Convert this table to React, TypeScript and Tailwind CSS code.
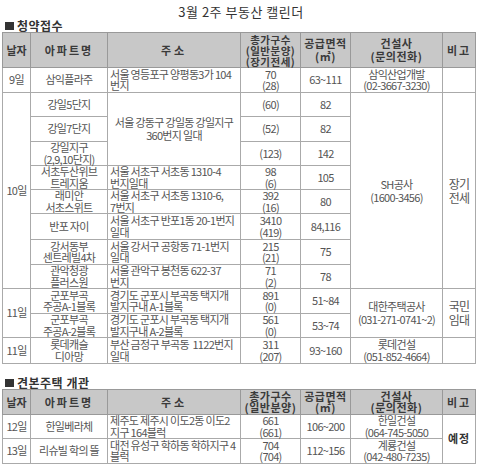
export default function App() {
  const td = 'border border-[#aaaaaa] text-center align-middle p-0 whitespace-nowrap leading-[11.5px]';
  const addr = 'border border-[#aaaaaa] text-left align-middle pl-[2px] whitespace-nowrap leading-[11.5px]';
  const th = 'border border-[#999999] bg-[#c8c8c8] text-center align-middle p-0 font-bold text-[#3a3a3a] tracking-[0.5px] whitespace-nowrap';

  return (
    <div className="w-[480px] h-[467px] bg-white font-['Noto_Sans_CJK_KR',sans-serif] text-[#555555] text-[11px] leading-[12px] tracking-[-0.7px] pl-[2px] overflow-hidden">
      {/* title */}
      <div className="h-[20px] text-center text-[13px] leading-[23px] tracking-[0.5px] text-[#333333]">3월 2주 부동산 캘린더</div>

      <div className="h-[12px] flex items-center gap-[3px] pl-[3px] text-[12px] leading-[12px] font-bold tracking-[0.5px] text-[#333333]">
        <span className="inline-block w-[9px] h-[8px] bg-[#333333]"></span>
        <span>청약접수</span>
      </div>

      {/* 청약접수 */}
      <table className="table-fixed border-collapse border border-[#888888] w-[473px]">
        <colgroup>
          <col className="w-[28px]" />
          <col className="w-[77px]" />
          <col className="w-[133px]" />
          <col className="w-[60px]" />
          <col className="w-[50px]" />
          <col className="w-[92px]" />
          <col className="w-[33px]" />
        </colgroup>
        <tbody>
          <tr className="h-[35px]">
            <td className={th + ' tracking-[0px]'}>날자</td>
            <td className={th + ' tracking-[2px]'}>아파트명</td>
            <td className={th + ' tracking-[3px]'}>주소</td>
            <td className={th + ' text-[10.5px] leading-[11px]'}>총가구수<br />(일반분양)<br />(장기전세)</td>
            <td className={th + ' leading-[13px]'}>공급면적<br />(㎡)</td>
            <td className={th + ' leading-[13px]'}>건설사<br />(문의전화)</td>
            <td className={th + ' tracking-[2px]'}>비고</td>
          </tr>
          <tr className="h-[25px]">
            <td className={td}>9일</td>
            <td className={td}>삼익플라주</td>
            <td className={addr}>서울 영등포구 양평동3가 104<br />번지</td>
            <td className={td}>70<br />(28)</td>
            <td className={td}>63~111</td>
            <td className={td}>삼익산업개발<br />(02-3667-3230)</td>
            <td className={td}></td>
          </tr>
          <tr className="h-[24px]">
            <td className={td} rowSpan={8}>10일</td>
            <td className={td}>강일5단지</td>
            <td className={td + ' leading-[13px]'} rowSpan={3}>서울 강동구 강일동 강일지구<br />360번지 일대</td>
            <td className={td}>(60)</td>
            <td className={td}>82</td>
            <td className={td + ' leading-[13px]'} rowSpan={8}>SH공사<br />(1600-3456)</td>
            <td className={td + ' text-[12px] leading-[14px]'} rowSpan={8}>장기<br />전세</td>
          </tr>
          <tr className="h-[25px]">
            <td className={td}>강일7단지</td>
            <td className={td}>(52)</td>
            <td className={td}>82</td>
          </tr>
          <tr className="h-[24px]">
            <td className={td}>강일지구<br />(2,9,10단지)</td>
            <td className={td}>(123)</td>
            <td className={td}>142</td>
          </tr>
          <tr className="h-[24px]">
            <td className={td}>서초두산위브<br />트레지움</td>
            <td className={addr}>서울 서초구 서초동 1310-4<br />번지일대</td>
            <td className={td}>98<br />(6)</td>
            <td className={td}>105</td>
          </tr>
          <tr className="h-[24px]">
            <td className={td}>래미안<br />서초스위트</td>
            <td className={addr}>서울 서초구 서초동 1310-6,<br />7번지</td>
            <td className={td}>392<br />(16)</td>
            <td className={td}>80</td>
          </tr>
          <tr className="h-[26px]">
            <td className={td}>반포 자이</td>
            <td className={addr}>서울 서초구 반포1동 20-1번지<br />일대</td>
            <td className={td}>3410<br />(419)</td>
            <td className={td}>84,116</td>
          </tr>
          <tr className="h-[25px]">
            <td className={td}>강서동부<br />센트레빌4차</td>
            <td className={addr}>서울 강서구 공항동 71-1번지<br />일대</td>
            <td className={td}>215<br />(21)</td>
            <td className={td}>75</td>
          </tr>
          <tr className="h-[24px]">
            <td className={td}>관악청광<br />플러스원</td>
            <td className={addr}>서울 관악구 봉천동 622-37<br />번지</td>
            <td className={td}>71<br />(2)</td>
            <td className={td}>78</td>
          </tr>
          <tr className="h-[25px]">
            <td className={td} rowSpan={2}>11일</td>
            <td className={td}>군포부곡<br />주공A-1블록</td>
            <td className={addr}>경기도 군포시 부곡동 택지개<br />발지구내 A-1블록</td>
            <td className={td}>891<br />(0)</td>
            <td className={td}>51~84</td>
            <td className={td + ' leading-[13px]'} rowSpan={2}>대한주택공사<br />(031-271-0741~2)</td>
            <td className={td + ' text-[12px] leading-[14px]'} rowSpan={2}>국민<br />임대</td>
          </tr>
          <tr className="h-[24px]">
            <td className={td}>군포부곡<br />주공A-2블록</td>
            <td className={addr}>경기도 군포시 부곡동 택지개<br />발지구내 A-2블록</td>
            <td className={td}>561<br />(0)</td>
            <td className={td}>53~74</td>
          </tr>
          <tr className="h-[26px]">
            <td className={td}>11일</td>
            <td className={td}>롯데캐슬<br />디아망</td>
            <td className={addr}>부산 금정구 부곡동 &nbsp;1122번지<br />일대</td>
            <td className={td}>311<br />(207)</td>
            <td className={td}>93~160</td>
            <td className={td}>롯데건설<br />(051-852-4664)</td>
            <td className={td}></td>
          </tr>
        </tbody>
      </table>

      <div className="mt-[12px] h-[13px] flex items-center gap-[3px] pl-[3px] text-[12px] leading-[13px] font-bold tracking-[0.5px] text-[#333333]">
        <span className="inline-block w-[9px] h-[8px] bg-[#333333]"></span>
        <span>견본주택 개관</span>
      </div>

      {/* 견본주택 개관 */}
      <table className="table-fixed border-collapse border border-[#777777] w-[473px]">
        <colgroup>
          <col className="w-[28px]" />
          <col className="w-[77px]" />
          <col className="w-[133px]" />
          <col className="w-[60px]" />
          <col className="w-[50px]" />
          <col className="w-[92px]" />
          <col className="w-[33px]" />
        </colgroup>
        <tbody>
          <tr className="h-[25px]">
            <td className={th + ' tracking-[0px]'}>날자</td>
            <td className={th + ' tracking-[2px]'}>아파트명</td>
            <td className={th + ' tracking-[3px]'}>주소</td>
            <td className={th + ' leading-[11.5px]'}>총가구수<br />(일반분양)</td>
            <td className={th + ' leading-[11.5px]'}>공급면적<br />(㎡)</td>
            <td className={th + ' leading-[11.5px]'}>건설사<br />(문의전화)</td>
            <td className={th + ' tracking-[2px]'}>비고</td>
          </tr>
          <tr className="h-[24px]">
            <td className={td}>12일</td>
            <td className={td}>한일베라체</td>
            <td className={addr}>제주도 제주시 이도2동 이도2<br />지구 164블럭</td>
            <td className={td}>661<br />(661)</td>
            <td className={td}>106~200</td>
            <td className={td}>한일건설<br />(064-745-5050</td>
            <td className={td + ' font-bold text-[#333333] tracking-[1px]'} rowSpan={2}>예정</td>
          </tr>
          <tr className="h-[25px]">
            <td className={td}>13일</td>
            <td className={td}>리슈빌 학의 뜰</td>
            <td className={addr}>대전 유성구 학하동 학하지구 4<br />블럭</td>
            <td className={td}>704<br />(704)</td>
            <td className={td}>112~156</td>
            <td className={td}>계룡건설<br />(042-480-7235)</td>
          </tr>
        </tbody>
      </table>
    </div>
  );
}
